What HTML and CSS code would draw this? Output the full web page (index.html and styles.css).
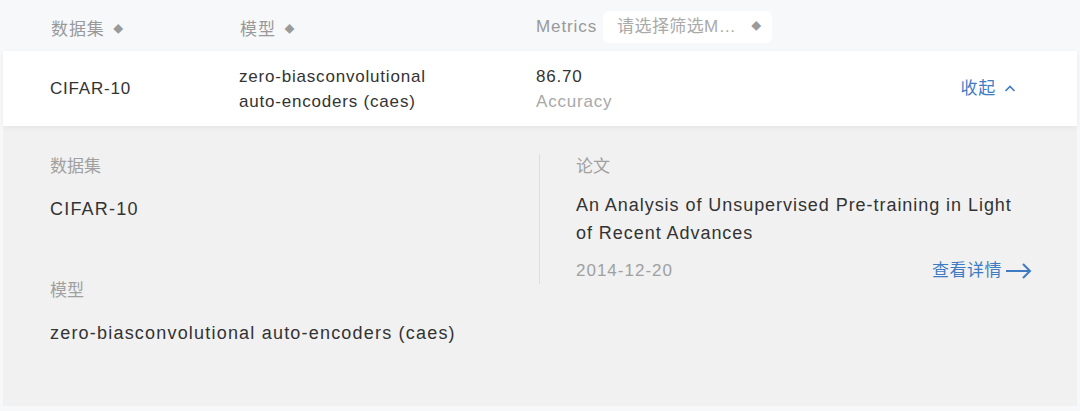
FILE: index.html
```html
<!DOCTYPE html>
<html>
<head>
    <meta charset="utf-8">
    <link rel="stylesheet" href="styles.css">
</head>
<body>
    <div class="board">
        <div class="head">
            <div class="col col-data">数据集 <span class="sort">◆</span></div>
            <div class="col col-model">模型 <span class="sort">◆</span></div>
            <div class="col col-metric">
                Metrics
                <div class="picker">请选择筛选M… <span class="sort sort-pick">◆</span></div>
            </div>
        </div>

        <div class="row">
            <div class="col col-data">CIFAR-10</div>
            <div class="col col-model">zero-biasconvolutional<br>auto-encoders (caes)</div>
            <div class="col col-metric">
                <div class="score">86.70</div>
                <div class="score-name">Accuracy</div>
            </div>
            <div class="toggle">收起
                <svg width="14" height="14" viewBox="0 0 14 14"><path d="M2.5 9 L7 4.5 L11.5 9" fill="none" stroke="#3f7bc2" stroke-width="1.6"/></svg>
            </div>
        </div>

        <div class="detail">
            <div class="detail-left">
                <div class="label">数据集</div>
                <div class="value">CIFAR-10</div>
                <div class="label label-gap">模型</div>
                <div class="value">zero-biasconvolutional auto-encoders (caes)</div>
            </div>
            <div class="detail-right">
                <div class="label">论文</div>
                <div class="paper-title">An Analysis of Unsupervised Pre-training in Light of Recent Advances</div>
                <div class="paper-foot">
                    <span class="date">2014-12-20</span>
                    <a class="more">查看详情
                        <svg width="27" height="20" viewBox="0 0 27 20"><path d="M1 10 H25 M18 3 L25 10 L18 17" fill="none" stroke="#3f7bc2" stroke-width="2"/></svg>
                    </a>
                </div>
            </div>
        </div>
    </div>
</body>
</html>
```

FILE: styles.css
```css
body {
    margin: 0;
    background: #f7f8fa;
    font-family: "Liberation Sans", "Noto Sans CJK SC", sans-serif;
    color: #333;
}
.board {
    padding: 0 3px;
}
.head {
    display: flex;
    align-items: center;
    height: 51px;
    box-sizing: border-box;
    padding-top: 3px;
    color: #999;
    font-size: 17px;
    letter-spacing: 0.9px;
}
.col-data {
    padding-left: 47px;
    box-sizing: border-box;
    width: 237px;
}
.head .col-data {
    padding-left: 48px;
}
.col-model {
    width: 296px;
}
.col-metric {
    flex: 1;
    display: flex;
    align-items: center;
}
.sort {
    font-size: 10px;
    color: #9a9a9a;
    margin-left: 3px;
    vertical-align: 2px;
}
.sort-pick {
    margin-left: 10px;
}
.picker {
    background: #fff;
    border-radius: 6px;
    margin-left: 6px;
    padding: 0 10px 0 14px;
    height: 32px;
    line-height: 32px;
    color: #aaa;
    letter-spacing: 0.4px;
}
.row {
    display: flex;
    align-items: center;
    height: 75px;
    background: #fff;
    font-size: 17px;
    line-height: 25px;
    letter-spacing: 0.8px;
    box-shadow: 0 2px 6px rgba(0, 0, 0, 0.05);
    position: relative;
}
.row .col-model {
    margin-left: -1px;
    width: 297px;
}
.row .col-metric {
    flex-direction: column;
    align-items: flex-start;
}
.score-name {
    color: #a8a8a8;
}
.toggle {
    margin-left: auto;
    padding-right: 60px;
    color: #3f7bc2;
    display: flex;
    align-items: center;
    gap: 7px;
}
.detail {
    display: flex;
    background: #f1f1f1;
    height: 280px;
    box-sizing: border-box;
    padding-top: 28px;
}
.detail-left {
    width: 489px;
    padding-left: 47px;
    padding-top: 2px;
}
.label {
    font-size: 17px;
    line-height: 22px;
    color: #a0a0a0;
}
.label-gap {
    margin-top: 59px;
}
.value {
    font-size: 18px;
    line-height: 24px;
    letter-spacing: 1.2px;
    margin-top: 19px;
    color: #333;
}
.detail-right {
    width: 493px;
    border-left: 1px solid #dedede;
    padding-left: 36px;
    padding-top: 2px;
    height: 130px;
    box-sizing: border-box;
}
.paper-title {
    font-size: 18px;
    line-height: 28px;
    letter-spacing: 0.95px;
    margin-top: 13px;
    color: #333;
}
.paper-foot {
    display: flex;
    align-items: center;
    justify-content: space-between;
    margin-top: 12px;
    font-size: 17px;
    line-height: 24px;
    letter-spacing: 1px;
}
.date {
    color: #a0a0a0;
}
.more {
    color: #3f7bc2;
    display: flex;
    align-items: center;
    gap: 3px;
    letter-spacing: 0.5px;
}
```
